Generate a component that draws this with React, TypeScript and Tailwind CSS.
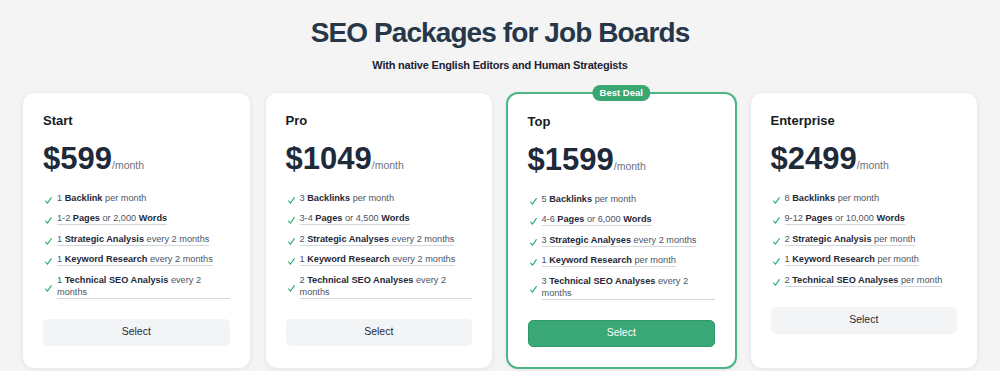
import React from "react";

type Feature = { parts: [string, boolean][]; underline: boolean };

const f = (underline: boolean, ...parts: [string, boolean][]): Feature => ({ parts, underline });

const plans: { name: string; price: string; featured?: boolean; features: Feature[] }[] = [
  {
    name: "Start",
    price: "$599",
    features: [
      f(false, ["1 ", false], ["Backlink", true], [" per month", false]),
      f(true, ["1-2 ", false], ["Pages", true], [" or 2,000 ", false], ["Words", true]),
      f(true, ["1 ", false], ["Strategic Analysis", true], [" every 2 months", false]),
      f(true, ["1 ", false], ["Keyword Research", true], [" every 2 months", false]),
      f(true, ["1 ", false], ["Technical SEO Analysis", true], [" every 2 months", false]),
    ],
  },
  {
    name: "Pro",
    price: "$1049",
    features: [
      f(false, ["3 ", false], ["Backlinks", true], [" per month", false]),
      f(true, ["3-4 ", false], ["Pages", true], [" or 4,500 ", false], ["Words", true]),
      f(true, ["2 ", false], ["Strategic Analyses", true], [" every 2 months", false]),
      f(true, ["1 ", false], ["Keyword Research", true], [" every 2 months", false]),
      f(true, ["2 ", false], ["Technical SEO Analyses", true], [" every 2 months", false]),
    ],
  },
  {
    name: "Top",
    price: "$1599",
    featured: true,
    features: [
      f(false, ["5 ", false], ["Backlinks", true], [" per month", false]),
      f(true, ["4-6 ", false], ["Pages", true], [" or 6,000 ", false], ["Words", true]),
      f(true, ["3 ", false], ["Strategic Analyses", true], [" every 2 months", false]),
      f(true, ["1 ", false], ["Keyword Research", true], [" per month", false]),
      f(true, ["3 ", false], ["Technical SEO Analyses", true], [" every 2 months", false]),
    ],
  },
  {
    name: "Enterprise",
    price: "$2499",
    features: [
      f(false, ["8 ", false], ["Backlinks", true], [" per month", false]),
      f(true, ["9-12 ", false], ["Pages", true], [" or 10,000 ", false], ["Words", true]),
      f(true, ["2 ", false], ["Strategic Analysis", true], [" per month", false]),
      f(true, ["1 ", false], ["Keyword Research", true], [" per month", false]),
      f(true, ["2 ", false], ["Technical SEO Analyses", true], [" per month", false]),
    ],
  },
];

function Check() {
  return (
    <span className="ml-[2px] flex w-[7px] shrink-0 translate-y-[2px] items-center">
      <svg width="7" height="7" viewBox="0 0 7 7" fill="none">
        <path d="M0.6 4 L2.4 6.2 L6.3 0.6" stroke="#1fa971" strokeWidth="1.1" strokeLinecap="round" strokeLinejoin="round" />
      </svg>
    </span>
  );
}

export default function App() {
  return (
    <div
      className="min-h-[371px] w-full bg-[#f4f4f4] pt-[16px]"
      style={{ fontFamily: '"Liberation Sans", Arial, sans-serif' }}
    >
      <h1 className="text-center text-[28px] font-bold leading-[34px] tracking-[-0.9px] text-[#26374a]">
        SEO Packages for Job Boards
      </h1>
      <p className="mt-[8px] text-center text-[11px] font-bold leading-[14px] tracking-[-0.2px] text-[#1c2333]">
        With native English Editors and Human Strategists
      </p>
      <div className="mt-[20px] grid grid-cols-4 gap-[14px] px-[22px]">
        {plans.map((p) => (
          <div
            key={p.name}
            className={
              p.featured
                ? "relative -mx-[1.5px] flex flex-col rounded-[12px] border-2 border-[#4cb584] bg-white px-[20px] pb-[20px] pt-[20px] shadow-[0_1px_4px_rgba(0,0,0,0.06)]"
                : "relative flex flex-col rounded-[12px] border border-[#ececec] bg-white px-[20px] pb-[22px] pt-[20px] shadow-[0_1px_4px_rgba(0,0,0,0.06)]"
            }
          >
            {p.featured && (
              <div className="absolute left-1/2 top-[-9px] -translate-x-1/2 rounded-full bg-[#3aa671] px-[7px] text-[9.5px] font-bold leading-[16px] text-white">
                Best Deal
              </div>
            )}
            <div className="text-[13px] font-bold leading-[16px] text-[#161b22]">{p.name}</div>
            <div className="mt-[13.5px] leading-none">
              <span className="text-[31px] font-bold leading-none text-[#1e2939]">{p.price}</span>
              <span className="text-[10.5px] leading-none text-[#6b7280]">/month</span>
            </div>
            <ul className="mt-[18px] flex flex-col gap-[7.5px]">
              {p.features.map((ft, i) => (
                <li key={i} className="flex items-center gap-[5px]">
                  <Check />
                  <span
                    className={
                      "inline-block border-b text-[9.2px] leading-[12px] text-[#4b5563] " +
                      (ft.underline ? "border-[#d4d7dc]" : "border-transparent")
                    }
                  >
                    {ft.parts.map(([t, b], j) =>
                      b ? (
                        <b key={j} className="font-bold text-[#1f2937]">
                          {t}
                        </b>
                      ) : (
                        <React.Fragment key={j}>{t}</React.Fragment>
                      )
                    )}
                  </span>
                </li>
              ))}
            </ul>
            <button
              className={
                p.featured
                  ? "mt-[20px] h-[27px] w-full rounded-[5px] border border-[#2f9a66] bg-[#3aa776] text-[10.5px] text-white"
                  : "mt-[20px] h-[27px] w-full rounded-[5px] bg-[#f3f4f6] text-[10.5px] text-[#1f2937]"
              }
            >
              Select
            </button>
          </div>
        ))}
      </div>
    </div>
  );
}
